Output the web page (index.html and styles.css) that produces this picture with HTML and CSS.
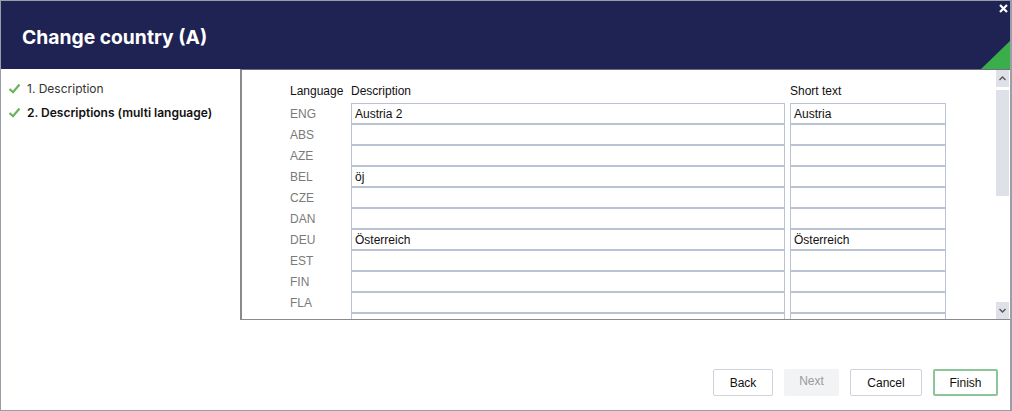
FILE: index.html
```html
<!DOCTYPE html>
<html>
<head>
<meta charset="UTF-8">
<title>Change country (A)</title>
<link rel="stylesheet" href="styles.css">
</head>
<body>
<div class="wnd">
  <div class="head">
    <h1>Change country (A)</h1>
    <svg class="close" width="9" height="9" viewBox="0 0 9 9"><path d="M1 1 L8 8 M8 1 L1 8" stroke="#fff" stroke-width="2.2"/></svg>
    <div class="corner"></div>
  </div>
  <div class="main">
    <ul class="steps">
      <li><svg width="13" height="11" viewBox="0 0 13 11"><path d="M1.5 6 L5 9.2 L11.5 1.5" fill="none" stroke="#6bb35a" stroke-width="2.2"/></svg>1. Description</li>
      <li class="cur"><svg width="13" height="11" viewBox="0 0 13 11"><path d="M1.5 6 L5 9.2 L11.5 1.5" fill="none" stroke="#6bb35a" stroke-width="2.2"/></svg>2. Descriptions (multi language)</li>
    </ul>
    <div class="panel">
      <div class="grid">
        <div class="hrow">
          <span class="lang">Language</span>
          <span class="desc">Description</span>
          <span class="short">Short text</span>
        </div>
        <div class="row"><span class="lang">ENG</span><input class="desc" value="Austria 2"><input class="short" value="Austria"></div>
        <div class="row"><span class="lang">ABS</span><input class="desc"><input class="short"></div>
        <div class="row"><span class="lang">AZE</span><input class="desc"><input class="short"></div>
        <div class="row"><span class="lang">BEL</span><input class="desc" value="öj"><input class="short"></div>
        <div class="row"><span class="lang">CZE</span><input class="desc"><input class="short"></div>
        <div class="row"><span class="lang">DAN</span><input class="desc"><input class="short"></div>
        <div class="row"><span class="lang">DEU</span><input class="desc" value="Österreich"><input class="short" value="Österreich"></div>
        <div class="row"><span class="lang">EST</span><input class="desc"><input class="short"></div>
        <div class="row"><span class="lang">FIN</span><input class="desc"><input class="short"></div>
        <div class="row"><span class="lang">FLA</span><input class="desc"><input class="short"></div>
        <div class="row"><span class="lang"></span><input class="desc"><input class="short"></div>
      </div>
      <div class="sbar">
        <div class="sbtn"><svg width="7" height="5" viewBox="0 0 7 5"><path d="M0.5 4 L3.5 1 L6.5 4" fill="none" stroke="#555" stroke-width="1.4"/></svg></div>
        <div class="thumb"></div>
        <div class="track"></div>
        <div class="sbtn"><svg width="7" height="5" viewBox="0 0 7 5"><path d="M0.5 1 L3.5 4 L6.5 1" fill="none" stroke="#555" stroke-width="1.4"/></svg></div>
      </div>
    </div>
  </div>
  <div class="foot">
    <button class="btn">Back</button>
    <button class="btn off">Next</button>
    <button class="btn">Cancel</button>
    <button class="btn ok">Finish</button>
  </div>
</div>
</body>
</html>
```
FILE: styles.css
```css
body {
  margin: 0;
  background: #ffffff;
}
.wnd {
  width: 1012px;
  height: 411px;
  box-sizing: border-box;
  border: 1px solid #9a9ea8;
  border-right-width: 2px;
  display: flex;
  flex-direction: column;
}
.head {
  position: relative;
  height: 68px;
  background-color: #1f2353;
  flex: none;
}
.head h1 {
  margin: 0;
  padding: 23px 0 0 21px;
  color: #ffffff;
  font-family: 'Inter', 'Roboto', sans-serif;
  font-size: 19.3px;
  font-weight: 700;
  line-height: 26px;
}
.close {
  position: absolute;
  right: 2px;
  top: 3px;
}
.corner {
  position: absolute;
  right: 0;
  bottom: 0;
  width: 29px;
  height: 28px;
  background: #3aae4a;
  clip-path: polygon(100% 0, 100% 100%, 0 100%);
}
.main {
  display: flex;
  height: 251px;
  flex: none;
}
.steps {
  list-style: none;
  margin: 0;
  padding: 7px 0 0 7px;
  width: 232px;
  font-family: 'Inter', 'Roboto', sans-serif;
  font-size: 12px;
  color: #333333;
}
.steps li {
  display: flex;
  align-items: center;
  gap: 6px;
  height: 24px;
}
.steps li.cur {
  font-weight: 600;
  color: #111111;
}
.panel {
  flex: 1;
  display: flex;
  border-left: 2px solid #8a8a8a;
  border-bottom: 1px solid #8a8a8a;
  overflow: hidden;
  border-top: 1px solid #6b6f80;
}
.grid {
  flex: 1;
  padding: 8px 0 0 48px;
  font-family: 'Liberation Sans', Arial, sans-serif;
  font-size: 12px;
}
.hrow, .row {
  display: flex;
  align-items: center;
}
.hrow {
  height: 25px;
  color: #111111;
}
.row {
  height: 21px;
}
.lang {
  width: 61px;
  flex: none;
}
.row .lang {
  color: #7a7a7a;
}
.desc {
  width: 434px;
  flex: none;
}
.short {
  width: 156px;
  flex: none;
  margin-left: 5px;
}
input {
  box-sizing: border-box;
  height: 21px;
  border: 1px solid #b9c3d1;
  padding: 0 3px;
  font-family: 'Liberation Sans', Arial, sans-serif;
  font-size: 12px;
  color: #111111;
  background: #ffffff;
  outline: none;
}
.sbar {
  width: 13px;
  flex: none;
  margin-right: 1px;
  display: flex;
  flex-direction: column;
}
.sbtn {
  height: 17px;
  background: #dfe1e8;
  display: flex;
  align-items: center;
  justify-content: center;
}
.thumb {
  margin-top: 3px;
  height: 106px;
  background: #dfe1e8;
}
.track {
  flex: 1;
}
.foot {
  flex: 1;
  display: flex;
  justify-content: flex-end;
  align-items: flex-start;
  gap: 11px;
  padding: 49px 12px 0 0;
}
.btn {
  height: 27px;
  box-sizing: border-box;
  border: 1px solid #cdd2dd;
  border-radius: 2px;
  background: #ffffff;
  font-family: 'Liberation Sans', Arial, sans-serif;
  font-size: 12px;
  color: #111111;
  padding: 0;
}
.btn:nth-child(1) { width: 60px; }
.btn.off {
  width: 55px;
  background: #f2f3f5;
  border-color: #f2f3f5;
  color: #9a9a9a;
  padding-bottom: 3px;
}
.btn:nth-child(3) { width: 72px; }
.btn.ok {
  width: 65px;
  border: 2px solid #8cc597;
}
```
